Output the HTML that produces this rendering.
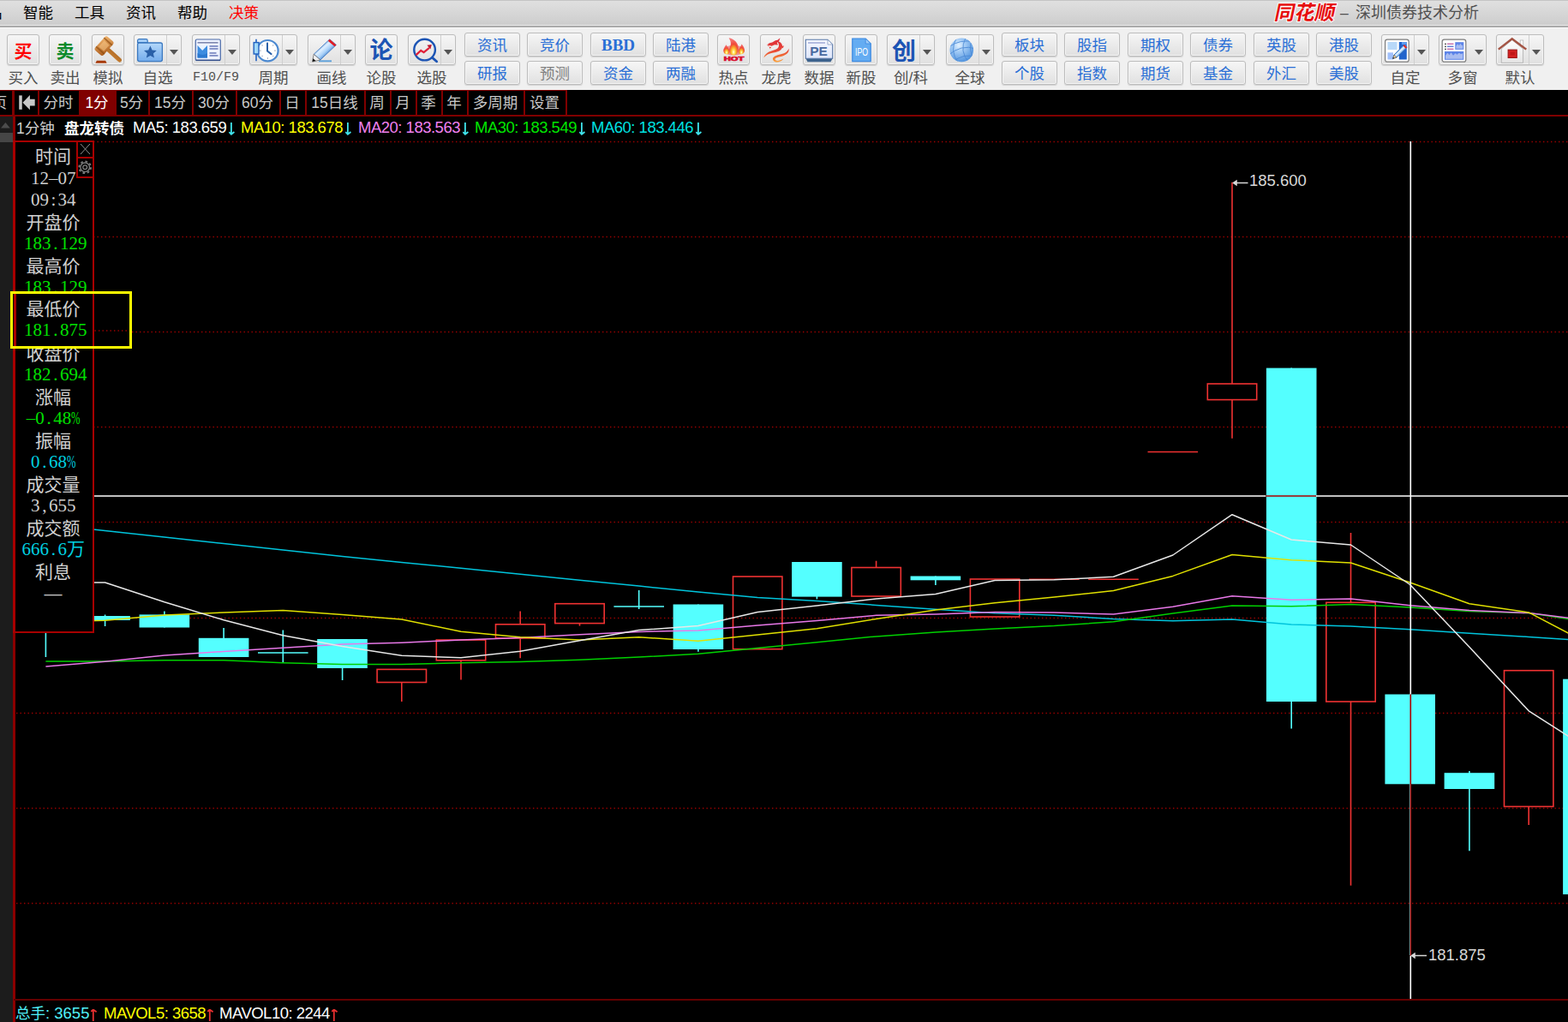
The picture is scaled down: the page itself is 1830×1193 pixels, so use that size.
<!DOCTYPE html>
<html lang="zh"><head><meta charset="utf-8"><title>同花顺 - 深圳债券技术分析</title>
<style>
*{box-sizing:border-box}
html,body{margin:0;padding:0}
body{width:1830px;height:1193px;position:relative;overflow:hidden;background:#000;font-family:"Liberation Sans","Noto Sans CJK SC",sans-serif;font-size:18px;color:#000}
.abs{position:absolute}
#menubar{left:0;top:0;width:1830px;height:29px;background:linear-gradient(#e0e0e0,#cdcdcd);border-top:1px solid #c4c4c4}
#mline1{left:0;top:29px;width:1830px;height:1px;background:#e8e8e8}
#mline2{left:0;top:30px;width:1830px;height:2px;background:#aaa}
#toolbar{left:0;top:32px;width:1830px;height:73px;background:#f0f0f0;border-top:1px solid #f8f8f8}
.mi{position:absolute;top:0;height:30px;line-height:31px;font-size:17.5px;white-space:nowrap}
.bb{position:absolute;top:40px;height:36px;border:1px solid #bdbdbd;border-radius:3px;background:linear-gradient(#f6f6f6,#e0e0e0);box-shadow:inset 0 0 0 1px #f4f4f4,0 1px 1px rgba(0,0,0,.13)}
.bb .sp{position:absolute;left:37px;top:0;width:1px;height:34px;background:#cfcfcf}
.bb .dd{position:absolute;left:41px;top:16.5px;width:0;height:0;border-left:5.5px solid transparent;border-right:5.5px solid transparent;border-top:6px solid #555}
.bb svg{position:absolute;left:0;top:0}
.bl{position:absolute;top:80px;height:22px;line-height:22px;font-size:17.5px;color:#505050;text-align:center;white-space:nowrap}
.sb{position:absolute;width:65px;height:28px;border:1px solid #bdbdbd;border-radius:3px;background:linear-gradient(#f6f6f6,#e0e0e0);box-shadow:inset 0 0 0 1px #f4f4f4,0 1px 1px rgba(0,0,0,.13);color:#2a6fd6;;font-size:17.5px;line-height:28px;text-align:center;white-space:nowrap}
#tabs{left:0;top:105px;width:1830px;height:31px;background:#000;border-bottom:2px solid #800000}
.tb{position:absolute;top:105px;height:31px;padding-right:1px;border:1px solid #800000;border-right-width:2px;border-bottom-width:2px;color:#c8c8c8;font-size:17.5px;line-height:29px;text-align:center;white-space:nowrap;overflow:hidden}
.tb.sel{background:#800000;color:#fff}
.hd{position:absolute;top:137px;height:26px;line-height:26px;font-size:17.5px;white-space:nowrap}
.ma{font-size:18.5px;letter-spacing:-.5px;top:136px}
.ad{vertical-align:top;margin:7px 0 0 3px}
#logo{font-weight:bold}
#logo .lg{display:inline-block;transform:skewX(-12deg);-webkit-text-stroke:2px #fff;paint-order:stroke fill}

#lstrip{left:0;top:136px;width:15px;height:1057px;background:#1c1c1c}
#lthumb{left:0;top:155px;width:15px;height:11px;background:#464646}
#lred{left:15px;top:136px;width:3px;height:1057px;background:#8b0000}
#botline{left:16px;top:1166px;width:1814px;height:2px;background:#640000}
#panel{left:15px;top:164px;width:95px;height:575px;background:#000;border:2px solid #a80000;border-left-width:3.5px}
#pbtn1,#pbtn2{left:89px;width:21px;border:2px solid #a80000;background:#000}
#pbtn1{top:164px;height:21px}
#pbtn2{top:183px;height:25px}
.pl{position:absolute;left:17.5px;width:89px;height:25px;line-height:25px;text-align:center;font-size:21px;color:#d0d0d0;white-space:nowrap}
.pv{font-family:"Liberation Serif","Noto Sans CJK SC",serif;font-size:21px;letter-spacing:0;margin-left:.3px}
.p7{margin-left:2.8px}
.pv i{display:inline-block;width:10.5px;text-align:center;font-style:normal}
.pv i.pc{text-align:left;transform:scaleX(.6);transform-origin:0 50%}
.gr{color:#00e000}.cy{color:#00d0e0}
#ybox{left:12px;top:340px;width:142px;height:67px;border:3px solid #ff0;background:#000;overflow:hidden}
.st{position:absolute;top:1170px;height:24px;line-height:25px;font-size:17.5px;white-space:nowrap}
.st b{font-weight:normal;font-size:18.5px;letter-spacing:-.5px}
.au{vertical-align:top;margin:8px 0 0 2px}
.pr{position:absolute;font-size:18.5px;color:#d8d8d8;height:20px;line-height:20px;white-space:nowrap}
</style></head>
<body>
<div id="menubar" class="abs"></div><div id="mline1" class="abs"></div><div id="mline2" class="abs"></div><div id="toolbar" class="abs"></div>
<span class="mi" style="left:-15px">品</span>
<span class="mi" style="left:27px;color:#000">智能</span>
<span class="mi" style="left:87px;color:#000">工具</span>
<span class="mi" style="left:147px;color:#000">资讯</span>
<span class="mi" style="left:207px;color:#000">帮助</span>
<span class="mi" style="left:267px;color:#f00">决策</span>
<span class="mi" id="logo" style="left:1488px;color:#e60f0f;font-size:23.5px;line-height:31px"><span class="lg">同花顺</span></span>
<span class="mi" style="left:1564px;color:#505050">&#8211;</span>
<span class="mi" style="left:1582px;color:#505050;width:146px;font-size:18px">深圳债券技术分析</span>
<div class="bb" style="left:8px;width:38px"><span class="" style="position:absolute;left:0;top:0;width:36px;height:34px;line-height:34px;text-align:center;color:#f00;font-size:21px;font-weight:bold;top:2px">买</span></div>
<span class="bl" style="left:-8px;width:70px">买入</span>
<div class="bb" style="left:57px;width:38px"><span class="" style="position:absolute;left:0;top:0;width:36px;height:34px;line-height:34px;text-align:center;color:#0a8a2a;font-size:21px;font-weight:bold;top:2px">卖</span></div>
<span class="bl" style="left:41px;width:70px">卖出</span>
<div class="bb" style="left:107px;width:38px"><svg width="36" height="34" viewBox="0 0 36 34"><defs><linearGradient id="gv1" x1="0" y1="0" x2="1" y2="1"><stop offset="0" stop-color="#f4b870"/><stop offset="1" stop-color="#a85818"/></linearGradient><linearGradient id="gv2" x1="0" y1="1" x2="1" y2="0"><stop offset="0" stop-color="#d89040"/><stop offset="1" stop-color="#a05a18"/></linearGradient></defs><path d="M3.4 32.7l1.5-2.9h10.2l1.5 2.9z" fill="#a83c0c"/><path d="M16 15L31.5 29" stroke="url(#gv2)" stroke-width="5" stroke-linecap="round"/><g transform="rotate(42 13.6 12.6)"><rect x="7.1" y="1.9" width="13" height="21.5" rx="2.800" fill="url(#gv1)"/><rect x="7.1" y="4.9" width="13" height="1.800" fill="#8a4a10" opacity=".65"/><rect x="7.1" y="18.6" width="13" height="1.800" fill="#8a4a10" opacity=".65"/><rect x="9.5" y="8" width="8" height="9.5" fill="#f8c888" opacity=".55"/></g></svg></div>
<span class="bl" style="left:91px;width:70px">模拟</span>
<div class="bb" style="left:156px;width:56px"><svg width="36" height="34" viewBox="0 0 36 34"><defs><linearGradient id="fd1" x1="0" y1="0" x2="0" y2="1"><stop offset="0" stop-color="#b4d8fa"/><stop offset="1" stop-color="#74acec"/></linearGradient></defs><path d="M3.6 8.5v-2a1.8 1.8 0 0 1 1.8-1.8h8a1.8 1.8 0 0 1 1.8 1.8v2z" fill="#a8d0f8" stroke="#3a78c0" stroke-width="1.2"/><rect x="3.6" y="9" width="28.8" height="21.6" rx="2" fill="url(#fd1)" stroke="#3a78c0" stroke-width="1.3"/><path d="M18.4 12.6l2.2 4.8 5.2.6-3.9 3.5 1.1 5.1-4.6-2.6-4.6 2.6 1.1-5.1-3.9-3.5 5.2-.6z" fill="#2a60a8"/></svg><i class="sp"></i><i class="dd"></i></div>
<span class="bl" style="left:149px;width:70px">自选</span>
<div class="bb" style="left:224px;width:56px"><svg width="36" height="34" viewBox="0 0 36 34"><rect x="3.3" y="5" width="29" height="24.5" rx="1.5" fill="#eef2ff" stroke="#4a6aa8" stroke-width="1.2"/><path d="M3.5 28.5h28.6v1.6H3.5z" fill="#34508c"/><rect x="5.5" y="8" width="24" height="1.6" fill="#8088b0"/><rect x="5.5" y="12" width="11.5" height="14.5" fill="#3c8ce0"/><path d="M5.5 12l5.7 6 5.8-6z" fill="#e8f2ff"/><path d="M5.5 21q5.8 4 11.5 0v5.5h-11.5z" fill="#2a78d0"/><g fill="#6878b8"><rect x="19.5" y="12.2" width="10" height="1.5"/><rect x="19.5" y="15.2" width="10" height="1.5"/><rect x="19.5" y="20.2" width="8" height="1.5"/><rect x="19.5" y="23.2" width="10" height="1.5"/></g></svg><i class="sp"></i><i class="dd"></i></div>
<span class="bl" style="left:217px;width:70px;font-family:'Liberation Mono',monospace;font-size:15px;letter-spacing:0">F10/F9</span>
<div class="bb" style="left:291px;width:56px"><svg width="36" height="34" viewBox="0 0 36 34"><circle cx="20.4" cy="18.2" r="12.2" fill="#fff" stroke="#4a88d0" stroke-width="2.2"/><g stroke="#b0b8c8" stroke-width="1.2"><path d="M20.4 8.5v2M20.4 26v2M10.7 18.2h2M28 18.2h2M13.5 11.3l1.2 1.2M27.3 11.3l-1.2 1.2M13.5 25l1.2-1.2M27.3 25l-1.2-1.2"/></g><path d="M20 9.5v9l4.6 3.6" fill="none" stroke="#2a60a8" stroke-width="2" stroke-linecap="round"/><path d="M7 4.8v25.4" stroke="#2060c0" stroke-width="1.6"/><rect x="4.2" y="8.6" width="5.8" height="13.4" fill="#a0d8f8" stroke="#2060c0" stroke-width="1.4"/></svg><i class="sp"></i><i class="dd"></i></div>
<span class="bl" style="left:284px;width:70px">周期</span>
<div class="bb" style="left:359px;width:56px"><svg width="36" height="34" viewBox="0 0 36 34"><defs><linearGradient id="pc1" x1="0" y1="0" x2="1" y2="1"><stop offset=".3" stop-color="#5c98dc"/><stop offset=".42" stop-color="#e0f0ff"/><stop offset=".56" stop-color="#a8d0f8"/><stop offset=".7" stop-color="#3c7cc8"/></linearGradient></defs><path d="M12 30.3h15" stroke="#2a88d8" stroke-width="1.8" opacity=".75"/><path d="M6.2 22.3L24.8 4.8l7.6 6.6L13.9 28.9z" fill="url(#pc1)" stroke="#3c74bc" stroke-width=".8"/><path d="M22.8 6.7l2-1.9 7.6 6.6-1.9 1.9z" fill="#e01c24"/><path d="M4.6 31.1l1.6-8.8 7.7 6.6z" fill="#f0f0f0" stroke="#666" stroke-width=".8"/><path d="M4.6 31.1l.7-3.8 3.3 2.8z" fill="#111"/></svg><i class="sp"></i><i class="dd"></i></div>
<span class="bl" style="left:352px;width:70px">画线</span>
<div class="bb" style="left:426px;width:38px"><span class="stk" style="position:absolute;left:0;top:0;width:36px;height:34px;line-height:34px;text-align:center;color:#1c54b4;font-size:27px;font-weight:bold;top:1px">论</span></div>
<span class="bl" style="left:410px;width:70px">论股</span>
<div class="bb" style="left:476px;width:56px"><svg width="36" height="34" viewBox="0 0 36 34"><circle cx="18.6" cy="17.1" r="12.3" fill="none" stroke="#1c54b4" stroke-width="2.4"/><path d="M27.6 26.4l5 4.4" stroke="#1c54b4" stroke-width="2.8" stroke-linecap="round"/><path d="M8.4 23.4l5.8-5.4 3.4 2.2 6.4-5.4" fill="none" stroke="#e02038" stroke-width="2.2"/><path d="M21.4 11.8l5.4-.8-1.4 5.4z" fill="#c01830"/></svg><i class="sp"></i><i class="dd"></i></div>
<span class="bl" style="left:469px;width:70px">选股</span>
<div class="bb" style="left:837px;width:38px"><svg width="36" height="34" viewBox="0 0 36 34"><defs><radialGradient id="ht1" cx=".5" cy=".82" r=".75"><stop offset="0" stop-color="#fff"/><stop offset=".16" stop-color="#ffe860"/><stop offset=".38" stop-color="#f8a428"/><stop offset=".62" stop-color="#f04838"/><stop offset="1" stop-color="#f47474"/></radialGradient></defs><ellipse cx="18.5" cy="17.8" rx="12.3" ry="6" fill="#f04848" opacity=".55"/><path d="M9.5 11.2C7 14 5.8 17.5 6.8 20.2 7.8 22.8 12 23.2 13.2 20.5 14.3 17.5 12 15 9.5 11.2z" fill="url(#ht1)"/><path d="M27.5 10.4C31 14 31.7 18 30.2 20.6 28.6 23.2 24.5 22.7 23.7 20 22.9 17 26 15 27.5 10.4z" fill="url(#ht1)"/><path d="M12.6 3.3C19 4.5 23.6 9 23.7 15 23.9 19.8 22 23.4 18.2 23.4 14.5 23.4 12.7 20 13.2 16.5 13.8 13 17 10.5 12.6 3.3z" fill="url(#ht1)"/><text x="18.5" y="30.2" text-anchor="middle" font-family="Liberation Sans,sans-serif" font-weight="bold" font-size="6.3" fill="#d81030" textLength="23.6" lengthAdjust="spacingAndGlyphs" stroke="#d81030" stroke-width=".7">HOT</text></svg></div>
<span class="bl" style="left:821px;width:70px">热点</span>
<div class="bb" style="left:887px;width:38px"><svg width="36" height="34" viewBox="0 0 36 34"><defs><linearGradient id="dg1" gradientUnits="userSpaceOnUse" x1="0" y1="3" x2="0" y2="33"><stop offset="0" stop-color="#dc2838"/><stop offset=".5" stop-color="#e84838"/><stop offset=".8" stop-color="#f47c30"/><stop offset="1" stop-color="#fcb040"/></linearGradient></defs><g fill="url(#dg1)"><path d="M18.5 6.5C26.5 8.5 27 15.5 21.5 18.5 16.5 21 8.5 20 3.3 26.5 5.5 19.5 13 18.7 17.8 16.6 22 14.6 22 10.5 18.5 6.5z"/><path d="M32.5 15.5C33.8 21 28 24 22.5 25.2 18 26 15.8 27 16.8 28.8 17.8 30.6 22 30.2 26.5 27.5 23.5 31.8 16.8 33 14.5 29.5 12.6 26.5 16 24 21.5 22.8 26.5 21.6 31.5 20 32.5 15.5z"/><path d="M6.6 11.7l3.4-2.5 3.2-.7 3.8-2.3 2.5-.4 3-2.5-1.3 3.8-2.4 2 1.2 2.4-4-.3-3.5 1.5-2.2-.6-2.5.9 1-1.8z"/><path d="M23.5 13.5l3.5-1.2-1.2 3zM9.5 13.5l2.8.8-1.8 1.5z"/></g></svg></div>
<span class="bl" style="left:871px;width:70px">龙虎</span>
<div class="bb" style="left:937px;width:38px"><svg width="36" height="34" viewBox="0 0 36 34"><defs><linearGradient id="pe1" x1="0" y1="0" x2="0" y2="1"><stop offset="0" stop-color="#f4f6ff"/><stop offset="1" stop-color="#dfe6fa"/></linearGradient></defs><path d="M2 26.5h32l-2.5 4.7H4.5z" fill="#3c628c"/><path d="M2.3 5.3h25.7l5.7 5.7v16.3H2.3z" fill="url(#pe1)" stroke="#5878a8" stroke-width="1.1"/><path d="M28 5.3v5.7h5.7z" fill="#fff" stroke="#8098c0" stroke-width=".8"/><rect x="5" y="8" width="20" height="2" fill="#b4bce0"/><text x="17.5" y="24.3" text-anchor="middle" font-family="Liberation Sans,sans-serif" font-weight="bold" font-size="15.5" fill="#4a6aa0">PE</text></svg></div>
<span class="bl" style="left:921px;width:70px">数据</span>
<div class="bb" style="left:986px;width:38px"><svg width="36" height="34" viewBox="0 0 36 34"><path d="M7.8 4h15.4l6 6v20.6H7.8z" fill="#64acf2" stroke="#3a88e0" stroke-width="1.2"/><path d="M23.2 4v6h6z" fill="#9ccaf8" stroke="#3a88e0" stroke-width=".8"/><text x="18.5" y="23.5" text-anchor="middle" font-family="Liberation Sans,sans-serif" font-size="13" fill="#fff" textLength="15" lengthAdjust="spacingAndGlyphs">IPO</text></svg></div>
<span class="bl" style="left:970px;width:70px">新股</span>
<div class="bb" style="left:1035px;width:56px"><span class="stk" style="position:absolute;left:0;top:0;width:36px;height:34px;line-height:34px;text-align:center;color:#1c54b4;font-size:28px;font-weight:bold;top:3px;left:1px">创</span><i class="sp"></i><i class="dd"></i></div>
<span class="bl" style="left:1028px;width:70px">创/科</span>
<div class="bb" style="left:1104px;width:56px"><svg width="36" height="34" viewBox="0 0 36 34"><defs><radialGradient id="gb1" cx=".38" cy=".3" r=".75"><stop offset="0" stop-color="#e4f2ff"/><stop offset=".35" stop-color="#a4ccf6"/><stop offset="1" stop-color="#4c90dc"/></radialGradient><clipPath id="gbc"><circle cx="17.3" cy="17.4" r="13.8"/></clipPath></defs><circle cx="17.3" cy="17.4" r="13.8" fill="url(#gb1)"/><g clip-path="url(#gbc)" fill="none" stroke="#4a88d4" stroke-width="1" opacity=".85"><path d="M2 14q14-10 30-6M1 24q16-14 33-8M6 32q14-12 28-6"/><path d="M12 2q-10 16 2 31M22 3q-8 16 4 29M29 6q-4 12 3 22"/></g></svg><i class="sp"></i><i class="dd"></i></div>
<span class="bl" style="left:1097px;width:70px">全球</span>
<div class="bb" style="left:1612px;width:56px"><svg width="36" height="34" viewBox="0 0 36 34"><rect x="3.6" y="5.2" width="27.6" height="26" rx="2.5" fill="#fff" stroke="#7c7c7c" stroke-width="1.2"/><rect x="6.5" y="8" width="11" height="9" fill="#b8d8f8"/><rect x="6.5" y="20.3" width="6.5" height="8.2" fill="#a0c0fc"/><rect x="19.8" y="8" width="9" height="20.5" fill="#2264cc"/><rect x="23" y="8" width="5.8" height="3" fill="#5c9cf0"/><path d="M12.5 27.5l1.5-4.5L26 11l3.2 3.2L17 26z" fill="#9cc8f4" stroke="#3870b8" stroke-width=".9"/><path d="M15 24.5L27.5 12.5" stroke="#e8f4ff" stroke-width="1.2"/><path d="M24.5 12.5l1.5-1.5 3.2 3.2-1.5 1.5z" fill="#e02828"/><path d="M12.5 27.5l1.5-4.5 3 3z" fill="#e8c890" stroke="#555" stroke-width=".6"/><path d="M12.5 27.5l.6-1.8 1.2 1.2z" fill="#222"/></svg><i class="sp"></i><i class="dd"></i></div>
<span class="bl" style="left:1605px;width:70px">自定</span>
<div class="bb" style="left:1679px;width:56px"><svg width="36" height="34" viewBox="0 0 36 34"><rect x="3.2" y="5.2" width="27.6" height="26" rx="2.5" fill="#fff" stroke="#7c7c7c" stroke-width="1.2"/><g fill="#333"><circle cx="7" cy="10.3" r=".9"/><circle cx="7" cy="13.3" r=".9"/><circle cx="7" cy="16.3" r=".9"/></g><g><rect x="9" y="9.6" width="7.5" height="1.3" fill="#c060a0"/><rect x="9" y="12.6" width="7.5" height="1.3" fill="#5070d0"/><rect x="9" y="15.6" width="7.5" height="1.3" fill="#c060a0"/></g><rect x="18.3" y="8.2" width="10" height="8.6" fill="#5c84e8"/><path d="M19.3 15.8v-3l2-2.5 1.5 2 1.5-2.5 2 2.5 1 -1v4.5z" fill="#a8bcf0"/><rect x="6" y="19" width="22.3" height="9.8" fill="#5c84e8"/><path d="M7 27.8v-4l2.5-3 2 2.5 2-3 2.5 3.5 2.5-2.5 2 1.5 2.5-2 2 1.500 2.3-1v6.5z" fill="#a8bcf0"/></svg><i class="dd"></i></div>
<span class="bl" style="left:1672px;width:70px">多窗</span>
<div class="bb" style="left:1746px;width:56px"><svg width="38" height="34" viewBox="0 0 38 34"><defs><linearGradient id="hm1" x1="0" y1="0" x2="0" y2="1"><stop offset="0" stop-color="#fff"/><stop offset="1" stop-color="#e4e4e4"/></linearGradient></defs><rect x="27.2" y="6" width="3.5" height="7" fill="#fff" stroke="#b8b8b8" stroke-width=".8"/><path d="M5.3 16l12.4-10.5 12.8 10.5v16.4H5.300z" fill="url(#hm1)" stroke="#b4b4b4" stroke-width=".9"/><path d="M1.8 16.6L17.7 4.2l16.6 12.4" fill="none" stroke="#a45444" stroke-width="2.4" stroke-linejoin="miter"/><rect x="13.2" y="17.2" width="10" height="9.2" fill="#d82020" stroke="#a01818" stroke-width="1.2"/><rect x="15.5" y="19.5" width="5.5" height="4" fill="#b01010" opacity=".6"/></svg><i class="sp"></i><i class="dd"></i></div>
<span class="bl" style="left:1739px;width:70px">默认</span>
<div class="sb" style="left:542px;top:38px">资讯</div>
<div class="sb" style="left:542px;top:71px">研报</div>
<div class="sb" style="left:615px;top:38px">竞价</div>
<div class="sb" style="left:615px;top:71px;color:#808080">预测</div>
<div class="sb" style="left:689px;top:38px;font-family:'Liberation Serif',serif;font-weight:bold;font-size:19px">BBD</div>
<div class="sb" style="left:689px;top:71px">资金</div>
<div class="sb" style="left:762px;top:38px">陆港</div>
<div class="sb" style="left:762px;top:71px">两融</div>
<div class="sb" style="left:1169px;top:38px">板块</div>
<div class="sb" style="left:1169px;top:71px">个股</div>
<div class="sb" style="left:1242px;top:38px">股指</div>
<div class="sb" style="left:1242px;top:71px">指数</div>
<div class="sb" style="left:1316px;top:38px">期权</div>
<div class="sb" style="left:1316px;top:71px">期货</div>
<div class="sb" style="left:1389px;top:38px">债券</div>
<div class="sb" style="left:1389px;top:71px">基金</div>
<div class="sb" style="left:1463px;top:38px">英股</div>
<div class="sb" style="left:1463px;top:71px">外汇</div>
<div class="sb" style="left:1536px;top:38px">港股</div>
<div class="sb" style="left:1536px;top:71px">美股</div>
<div id="tabs" class="abs"></div>
<div class="tb" style="left:-14px;width:30px;border-left:0">页</div>
<div class="tb" style="left:16px;width:30px"><svg width="24" height="22" viewBox="0 0 24 22" style="position:absolute;left:2px;top:4px"><path d="M5 1.4v16.4" stroke="#c8c8c8" stroke-width="3.5" fill="none"/><path d="M7.5 9.8l8.400-8.800v4.800h5.800v7.700h-5.800v4.700z" fill="#c8c8c8"/></svg></div>
<div class="tb" style="left:44px;width:50px">分时</div>
<div class="tb sel" style="left:92px;width:44px">1分</div>
<div class="tb" style="left:134px;width:41px">5分</div>
<div class="tb" style="left:173px;width:53px">15分</div>
<div class="tb" style="left:224px;width:53px">30分</div>
<div class="tb" style="left:275px;width:53px">60分</div>
<div class="tb" style="left:326px;width:32px">日</div>
<div class="tb" style="left:356px;width:71px">15日线</div>
<div class="tb" style="left:425px;width:32px">周</div>
<div class="tb" style="left:455px;width:32px">月</div>
<div class="tb" style="left:485px;width:32px">季</div>
<div class="tb" style="left:515px;width:32px">年</div>
<div class="tb" style="left:545px;width:68px">多周期</div>
<div class="tb" style="left:611px;width:51px">设置</div>
<span class="hd" style="left:19px;color:#d0d0d0">1分钟</span>
<span class="hd" style="left:75px;color:#fff;font-weight:bold;width:74px">盘龙转债</span>
<span class="hd ma" style="left:155px;color:#fff">MA5: 183.659<svg class="ad" width="9" height="15" viewBox="0 0 9 15"><path d="M2.9 0V13.6M.3 11l2.6 2.800L6.4 11" fill="none" stroke="#40e4ec" stroke-width="1.8"/></svg></span>
<span class="hd ma" style="left:281px;color:#ff0">MA10: 183.678<svg class="ad" width="9" height="15" viewBox="0 0 9 15"><path d="M2.9 0V13.6M.3 11l2.6 2.800L6.4 11" fill="none" stroke="#40e4ec" stroke-width="1.8"/></svg></span>
<span class="hd ma" style="left:418px;color:#f080f0">MA20: 183.563<svg class="ad" width="9" height="15" viewBox="0 0 9 15"><path d="M2.9 0V13.6M.3 11l2.6 2.800L6.4 11" fill="none" stroke="#40e4ec" stroke-width="1.8"/></svg></span>
<span class="hd ma" style="left:554px;color:#00e600">MA30: 183.549<svg class="ad" width="9" height="15" viewBox="0 0 9 15"><path d="M2.9 0V13.6M.3 11l2.6 2.800L6.4 11" fill="none" stroke="#40e4ec" stroke-width="1.8"/></svg></span>
<span class="hd ma" style="left:690px;color:#00e0e0">MA60: 183.446<svg class="ad" width="9" height="15" viewBox="0 0 9 15"><path d="M2.9 0V13.6M.3 11l2.6 2.800L6.4 11" fill="none" stroke="#40e4ec" stroke-width="1.8"/></svg></span>
<svg id="chart" width="1830" height="1193" viewBox="0 0 1830 1193" style="position:absolute;left:0;top:0">
<g stroke="#9a0000" stroke-width="1.4" stroke-dasharray="1.4 3.1">
<line x1="19" y1="165.5" x2="1830" y2="165.5"/>
<line x1="19" y1="276.5" x2="1830" y2="276.5"/>
<line x1="19" y1="387.5" x2="1830" y2="387.5"/>
<line x1="19" y1="498.5" x2="1830" y2="498.5"/>
<line x1="19" y1="609.5" x2="1830" y2="609.5"/>
<line x1="19" y1="721.5" x2="1830" y2="721.5"/>
<line x1="19" y1="832.5" x2="1830" y2="832.5"/>
<line x1="19" y1="943.5" x2="1830" y2="943.5"/>
<line x1="19" y1="1054.5" x2="1830" y2="1054.5"/>
</g>
<g stroke-width="1.6">
<line x1="53.4" y1="700" x2="53.4" y2="767" stroke="#54ffff"/>
<line x1="122.6" y1="717.5" x2="122.6" y2="731" stroke="#54ffff"/>
<rect x="93.3" y="719" width="58.6" height="5" fill="#54ffff"/>
<line x1="191.9" y1="713.4" x2="191.9" y2="732.5" stroke="#54ffff"/>
<rect x="162.6" y="717.4" width="58.6" height="15.1" fill="#54ffff"/>
<line x1="261.1" y1="733" x2="261.1" y2="767" stroke="#54ffff"/>
<rect x="231.8" y="744.8" width="58.6" height="22.2" fill="#54ffff"/>
<line x1="330.3" y1="735.5" x2="330.3" y2="773" stroke="#54ffff"/>
<line x1="301" y1="762" x2="359.6" y2="762" stroke="#54ffff"/>
<line x1="399.6" y1="746" x2="399.6" y2="794" stroke="#54ffff"/>
<rect x="370.2" y="746" width="58.6" height="34" fill="#54ffff"/>
<line x1="468.8" y1="796.5" x2="468.8" y2="819" stroke="#f03232"/>
<rect x="440.1" y="781.4" width="57.4" height="15.1" fill="none" stroke="#f03232"/>
<line x1="538" y1="770.8" x2="538" y2="793.5" stroke="#f03232"/>
<rect x="509.3" y="747" width="57.4" height="23.8" fill="none" stroke="#f03232"/>
<line x1="607.2" y1="713.5" x2="607.2" y2="728.8" stroke="#f03232"/>
<line x1="607.2" y1="745" x2="607.2" y2="768.3" stroke="#f03232"/>
<rect x="578.5" y="728.8" width="57.4" height="16.2" fill="none" stroke="#f03232"/>
<line x1="676.5" y1="727.6" x2="676.5" y2="730.6" stroke="#f03232"/>
<rect x="647.8" y="704.7" width="57.4" height="22.9" fill="none" stroke="#f03232"/>
<line x1="745.7" y1="689" x2="745.7" y2="711" stroke="#54ffff"/>
<line x1="716.4" y1="708" x2="775" y2="708" stroke="#54ffff"/>
<line x1="814.9" y1="705.5" x2="814.9" y2="760.8" stroke="#54ffff"/>
<rect x="785.6" y="705.5" width="58.6" height="52.5" fill="#54ffff"/>
<rect x="855.5" y="673" width="57.4" height="84.7" fill="none" stroke="#f03232"/>
<line x1="953.4" y1="656" x2="953.4" y2="699.4" stroke="#54ffff"/>
<rect x="924.1" y="656" width="58.6" height="40.6" fill="#54ffff"/>
<line x1="1022.6" y1="654.7" x2="1022.6" y2="662.5" stroke="#f03232"/>
<rect x="993.9" y="662.5" width="57.4" height="33.5" fill="none" stroke="#f03232"/>
<line x1="1091.9" y1="672.5" x2="1091.9" y2="683" stroke="#54ffff"/>
<rect x="1062.6" y="672.5" width="58.6" height="4.8" fill="#54ffff"/>
<rect x="1132.4" y="676" width="57.4" height="44" fill="none" stroke="#f03232"/>
<line x1="1201" y1="676.3" x2="1259.6" y2="676.3" stroke="#f03232"/>
<line x1="1270.2" y1="676.3" x2="1328.8" y2="676.3" stroke="#f03232"/>
<line x1="1339.5" y1="527.5" x2="1398.1" y2="527.5" stroke="#f03232"/>
<line x1="1438" y1="212.8" x2="1438" y2="448" stroke="#f03232"/>
<line x1="1438" y1="466.6" x2="1438" y2="511.7" stroke="#f03232"/>
<rect x="1409.3" y="448" width="57.4" height="18.6" fill="none" stroke="#f03232"/>
<line x1="1507.2" y1="429.6" x2="1507.2" y2="850.6" stroke="#54ffff"/>
<rect x="1477.9" y="429.6" width="58.6" height="389.4" fill="#54ffff"/>
<line x1="1576.5" y1="622" x2="1576.5" y2="703.3" stroke="#f03232"/>
<line x1="1576.5" y1="819" x2="1576.5" y2="1033.7" stroke="#f03232"/>
<rect x="1547.8" y="703.3" width="57.4" height="115.7" fill="none" stroke="#f03232"/>
<line x1="1645.7" y1="810.5" x2="1645.7" y2="1115" stroke="#54ffff"/>
<rect x="1616.4" y="810.5" width="58.6" height="104.8" fill="#54ffff"/>
<line x1="1714.9" y1="900" x2="1714.9" y2="993.2" stroke="#54ffff"/>
<rect x="1685.6" y="902.2" width="58.6" height="18.8" fill="#54ffff"/>
<line x1="1784.2" y1="941.5" x2="1784.2" y2="963" stroke="#f03232"/>
<rect x="1755.5" y="782.7" width="57.4" height="158.8" fill="none" stroke="#f03232"/>
<rect x="1824.1" y="792.7" width="58.6" height="251.3" fill="#54ffff"/>
</g>
<g fill="none" stroke-width="1.5" stroke-linejoin="round">
<polyline points="53.4,612 122.6,619.6 191.9,627.1 261.1,634.6 330.3,642 399.6,649.5 468.8,656.5 538,663.3 607.2,670.3 676.5,677.3 745.7,684.1 814.9,691.1 884.2,697.5 953.4,701.4 1022.6,706.4 1091.9,711.2 1161.1,715.7 1230.3,718.3 1299.5,722.5 1368.8,724.7 1438,723 1507.2,729 1576.5,731 1645.7,734.8 1714.9,739.3 1784.2,743.4 1853.4,748" stroke="#00c4dc"/>
<polyline points="53.4,772 122.6,772 191.9,770.7 261.1,770.7 330.3,773.7 399.6,775.5 468.8,775.4 538,773.8 607.2,772.6 676.5,770.3 745.7,767 814.9,763.3 884.2,756.6 953.4,749.7 1022.6,742.9 1091.9,738 1161.1,733.9 1230.3,730.6 1299.5,725.7 1368.8,716.1 1438,707 1507.2,707.8 1576.5,705.4 1645.7,709 1714.9,713.5 1784.2,715.6 1853.4,726" stroke="#00d000"/>
<polyline points="53.4,778 122.6,772.2 191.9,765 261.1,760.5 330.3,756.2 399.6,751.9 468.8,750.2 538,747 607.2,744.4 676.5,740.7 745.7,737.4 814.9,736 884.2,730 953.4,724.5 1022.6,718.3 1091.9,717 1161.1,714.5 1230.3,715 1299.5,717 1368.8,708.3 1438,695.7 1507.2,700.3 1576.5,699 1645.7,706.8 1714.9,712.6 1784.2,715.6 1853.4,724" stroke="#e878e8"/>
<polyline points="53.4,726 122.6,724.2 191.9,718 261.1,715 330.3,712.4 399.6,717.4 468.8,723 538,737.3 607.2,743.7 676.5,747 745.7,743.7 814.9,748.2 884.2,741 953.4,733.8 1022.6,722.5 1091.9,712.1 1161.1,703.7 1230.3,697 1299.5,689.4 1368.8,672.4 1438,647.5 1507.2,653.7 1576.5,657 1645.7,680 1714.9,704.7 1784.2,714.9 1853.4,751" stroke="#e0e000"/>
<polyline points="53.4,680 122.6,680 191.9,702.8 261.1,723.7 330.3,741.8 399.6,754.4 468.8,765.3 538,767.8 607.2,760.2 676.5,747.7 745.7,735.6 814.9,730.6 884.2,714.5 953.4,707 1022.6,699 1091.9,693.6 1161.1,677.5 1230.3,676.8 1299.5,673.2 1368.8,648 1438,600.7 1507.2,630 1576.5,636 1645.7,682.5 1714.9,755.3 1784.2,829.8 1853.4,874" stroke="#e8e8e8"/>
</g>
<g stroke-width="1.6" stroke="#fff"><path d="M110 579H1477.5M1536 579H1830M1646.3 165V810.5M1646.3 1115.5V1166"/>
<path stroke="#ab0000" d="M1477.5 579H1536M1646.3 810.5V1115.5"/></g>
<path d="M1439 213.5H1456.5M1439.3 213.5l3.8-2.6v5.2z" stroke="#d8d8d8" fill="#d8d8d8" stroke-width="1.3"/>
<path d="M1647 1115.5H1665M1647.3 1115.5l3.8-2.6v5.2z" stroke="#d8d8d8" fill="#d8d8d8" stroke-width="1.3"/>
</svg>
<div id="lstrip" class="abs"></div><div id="lthumb" class="abs"></div>
<svg class="abs" style="left:1.3px;top:142.6px" width="12" height="8"><path d="M0 6.5l5.4-6.5 5.4 6.5z" fill="#4c4c4c"/></svg>
<div id="lred" class="abs"></div><div id="botline" class="abs"></div>
<div id="panel" class="abs"></div>
<div id="pbtn1" class="abs"><svg width="17" height="17" style="position:absolute;left:0;top:0"><path d="M3 2l11 12M14 2l-11 12" stroke="#909090" stroke-width="1" fill="none"/></svg></div>
<div id="pbtn2" class="abs"><svg width="17" height="21" style="position:absolute;left:0;top:0"><g fill="none" stroke="#7c7c7c"><circle cx="8.2" cy="10.3" r="5.3" stroke-width="1.4"/><circle cx="8.2" cy="10.3" r="6.9" stroke-width="1.8" stroke-dasharray="2.71 2.71"/><circle cx="8.2" cy="10.3" r="2.4" stroke-width="1.3"/></g></svg></div>
<div class="pl " style="top:170.0px">时间</div>
<div class="pl pv" style="top:195.5px">12<i>&#8211;</i>07</div>
<div class="pl pv" style="top:221.0px">09<i>:</i>34</div>
<div class="pl " style="top:246.5px">开盘价</div>
<div class="pl pv p7 gr" style="top:272.0px">183<i>.</i>129</div>
<div class="pl " style="top:297.5px">最高价</div>
<div class="pl pv p7 gr" style="top:323.0px">183<i>.</i>129</div>
<div class="pl " style="top:348.5px">最低价</div>
<div class="pl pv p7 gr" style="top:374.0px">181<i>.</i>875</div>
<div class="pl " style="top:399.5px">收盘价</div>
<div class="pl pv p7 gr" style="top:425.0px">182<i>.</i>694</div>
<div class="pl " style="top:450.5px">涨幅</div>
<div class="pl pv gr" style="top:476.0px"><i>&#8211;</i>0<i>.</i>48<i class="pc">%</i></div>
<div class="pl " style="top:501.5px">振幅</div>
<div class="pl pv cy" style="top:527.0px">0<i>.</i>68<i class="pc">%</i></div>
<div class="pl " style="top:552.5px">成交量</div>
<div class="pl pv" style="top:578.0px">3<i>,</i>655</div>
<div class="pl " style="top:603.5px">成交额</div>
<div class="pl pv cy" style="top:629.0px">666<i>.</i>6万</div>
<div class="pl " style="top:654.5px">利息</div>
<div class="pl " style="top:680.0px">&#8212;</div>
<div id="ybox" class="abs"><div class="abs" style="left:1px;top:0;width:3px;height:70px;background:#a80000"></div><div class="abs" style="left:93px;top:0;width:2px;height:70px;background:#a80000"></div><svg class="abs" style="left:95px;top:42px" width="50" height="2"><line x1="0.5" y1="1" x2="50" y2="1" stroke="#9a0000" stroke-width="1.4" stroke-dasharray="1.4 3.1"/></svg><div class="pl" style="left:2.5px;top:4.5px">最低价</div><div class="pl pv p7 gr" style="left:2.5px;top:30px">181<i>.</i>875</div></div>
<span class="pr" style="left:1458px;top:201px">185.600</span>
<span class="pr" style="left:1667px;top:1105px">181.875</span>
<span class="st" style="left:18px;color:#50f0f8">总手<b style="letter-spacing:0">: 3655</b><svg class="au" width="9" height="15" viewBox="0 0 9 15"><path d="M2.8 14V.8M.2 2.9L2.8.5l3.8 2.7" fill="none" stroke="#e83030" stroke-width="1.8"/></svg></span>
<span class="st" style="left:121px;color:#ff0"><b>MAVOL5: 3658</b><svg class="au" width="9" height="15" viewBox="0 0 9 15"><path d="M2.8 14V.8M.2 2.9L2.8.5l3.8 2.7" fill="none" stroke="#e83030" stroke-width="1.8"/></svg></span>
<span class="st" style="left:256px;color:#fff"><b>MAVOL10: 2244</b><svg class="au" width="9" height="15" viewBox="0 0 9 15"><path d="M2.8 14V.8M.2 2.9L2.8.5l3.8 2.7" fill="none" stroke="#e83030" stroke-width="1.8"/></svg></span>
</body></html>
